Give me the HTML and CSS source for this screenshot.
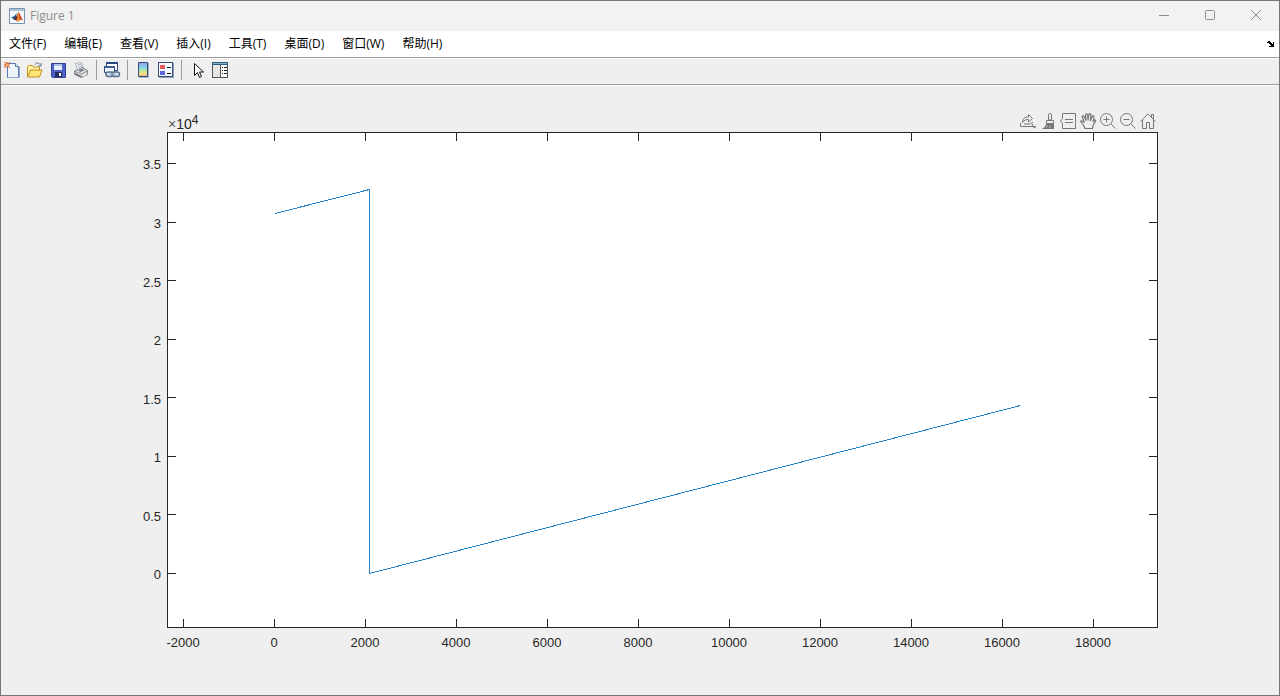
FILE: index.html
```html
<!DOCTYPE html>
<html lang="zh-CN">
<head>
<meta charset="utf-8">
<title>Figure 1</title>
<link rel="stylesheet" href="styles.css">
</head>
<body>
<div class="window">
  <header class="titlebar">
    <svg class="logo" width="16" height="16" viewBox="0 0 16 16" aria-hidden="true">
      <path d="M.5.5h15v15H.5z" fill="#f7fafc" stroke="#7894ac"/>
      <path d="M1 1h14v2H1z" fill="#a9c4da"/>
      <path d="M2 9.500l3-1.500 3-3-1.500 5.500-1.500 1z" fill="#2c6d9c"/>
      <path d="M4.500 11.500L7 9l2.500-5c.5 0 1 1 1.500 2.500l3 6-2.500-1-3 2.500-2-2.500z" fill="#cf4420"/>
      <path d="M9.500 4c-.8 3-1 5.500-1.500 10l2-1.800c0-3 0-6-.5-8.200z" fill="#f1a23a"/>
      <path d="M4.500 11.500L7 8l1.500 1-1.800 3.200z" fill="#4a2538"/>
    </svg>
    <h1 class="title">Figure 1</h1>
    <div class="window-controls">
      <button class="window-button" aria-label="最小化"><svg width="12" height="12" viewBox="0 0 12 12"><path d="M1 5.500h10"/></svg></button>
      <button class="window-button" aria-label="最大化"><svg width="12" height="12" viewBox="0 0 12 12"><rect x="1.500" y=".5" width="9" height="9" rx="1"/></svg></button>
      <button class="window-button" aria-label="关闭"><svg width="12" height="12" viewBox="0 0 12 12"><path d="M1 0l10 10M11 0L1 10"/></svg></button>
    </div>
  </header>

  <nav class="menubar">
    <button class="menu">文件(F)</button>
    <button class="menu">编辑(E)</button>
    <button class="menu">查看(V)</button>
    <button class="menu">插入(I)</button>
    <button class="menu">工具(T)</button>
    <button class="menu">桌面(D)</button>
    <button class="menu">窗口(W)</button>
    <button class="menu">帮助(H)</button>
    <button class="dock" aria-label="停靠图窗"><svg width="8" height="6" viewBox="0 0 8 6" shape-rendering="crispEdges"><path d="M1 0h2v1h1v1h1v1h1V1h1v5H2V5h2V4H3V3H2V2H1zM0 1h1v1H0z"/></svg></button>
  </nav>

  <div class="toolbar" role="toolbar">
    <button class="tool" aria-label="新建图窗"><svg width="16" height="16" viewBox="0 0 16 16">
      <path d="M3.500 1.500h8l3 3v11h-11z" fill="#edf4fc" stroke="#5678ad"/><path d="M11.500 1.500v3h3" fill="#fff" stroke="#5678ad"/><path d="M15.500 5v10.500H4" fill="none" stroke="#91aacb"/>
      <circle cx="3" cy="3" r="2" fill="#ffb27c" stroke="#df632e"/><path d="M3 0v1M0 3h1M5 1l1-1M5 5l1 1M0 6l1-1M0 0l1 1" stroke="#df632e"/></svg></button>
    <button class="tool" aria-label="打开文件"><svg width="16" height="16" viewBox="0 0 16 16">
      <path d="M.5 14.500V4.500l1-1h4l1 1.500h6v3" fill="#fff1a4" stroke="#c49318"/><path d="M.5 15L3.500 8h11.500l-2.500 7z" fill="#ffe477" stroke="#be8d18"/><path d="M8 2.500c1-2 4-2 5 0M14 1v3h-3" fill="none" stroke="#59718c"/></svg></button>
    <button class="tool" aria-label="保存图窗"><svg width="16" height="16" viewBox="0 0 16 16">
      <path d="M1.500 1.500h14v14h-13l-1-1z" fill="#4f60c6" stroke="#303e97"/><path d="M4 2h8v6H4z" fill="#e9eefb"/><path d="M4 2h8v2H4z" fill="#b1c2e8"/><path d="M5 10h7v5H5z" fill="#222d5e"/><path d="M9 11h2v3H9z" fill="#fff"/></svg></button>
    <button class="tool" aria-label="打印图窗"><svg width="16" height="16" viewBox="0 0 16 16">
      <path d="M4.500 8L2.500 1.500 8 .5l3 6.500" fill="#fff" stroke="#a4abb5"/><path d="M4.500 3l4-1M5 5l4-1" stroke="#9faec0"/><path d="M1.500 9l7.500-3.500 5.500 3v4l-6 3-7-3z" fill="#dcdee0" stroke="#858990"/><path d="M5 8.500l4-1.800 2.500 1.300-4 2z" fill="#777b82"/><path d="M2 9.500l6.500 2.500 6-3" fill="none" stroke="#8b8f95"/><path d="M2 11l6.500 3v1.500L2 12.500z" fill="#686d74"/><path d="M10 13l3-1.500V13l-3 1.500z" fill="#f7f7ef"/></svg></button>
    <span class="separator"></span>
    <button class="tool" aria-label="链接绘图"><svg width="16" height="16" viewBox="0 0 16 16">
      <path d="M2.500.5h11v8h-11z" fill="#fff" stroke="#29477e"/><path d="M2 0h12v2H2z" fill="#29477e"/><path d="M.5 4.500h10v6H.5z" fill="#eef4fb" stroke="#29477e"/><path d="M0 4h11v2H0z" fill="#3a5b94"/><rect x="2" y="10" width="7" height="4.500" rx="2.200" fill="#dce5ef" stroke="#536d8f" stroke-width="1.500"/><rect x="8" y="10" width="7.500" height="4.500" rx="2.200" fill="#dce5ef" stroke="#536d8f" stroke-width="1.500"/><path d="M5.500 12.300h6" stroke="#8ea7c5" stroke-width="1.500"/></svg></button>
    <span class="separator"></span>
    <button class="tool" aria-label="插入颜色栏"><svg width="16" height="16" viewBox="0 0 16 16">
      <defs><linearGradient id="bar" x2="0" y2="1"><stop stop-color="#9b99e8"/><stop offset=".35" stop-color="#83d6ed"/><stop offset=".65" stop-color="#cce78d"/><stop offset=".82" stop-color="#fadf81"/><stop offset="1" stop-color="#f39b91"/></linearGradient></defs>
      <path d="M3.500.5h9v14h-9z" fill="url(#bar)" stroke="#334c76"/><path d="M13.500 1v14.500H4" fill="none" stroke="#a7b3c5"/></svg></button>
    <button class="tool" aria-label="插入图例"><svg width="16" height="16" viewBox="0 0 16 16" shape-rendering="crispEdges">
      <path d="M.5.5h14v14H.5z" fill="#f6f9ff" stroke="#334c76"/><path d="M15.500 1v14.500H1" fill="none" stroke="#8d9fbd"/><path d="M2 3h5v4H2z" fill="#e35b5b"/><path d="M2 9h5v4H2z" fill="#6262df"/><path d="M9 5.500h4M9 11.500h4" stroke="#111"/></svg></button>
    <span class="separator"></span>
    <button class="tool" aria-label="编辑绘图"><svg width="16" height="16" viewBox="0 0 16 16">
      <path d="M5.500 1.500v12l3-3 2 5 2-1-2-4.500h4z" fill="#fff" stroke="#111"/></svg></button>
    <button class="tool" aria-label="打开属性检查器"><svg width="16" height="16" viewBox="0 0 16 16" shape-rendering="crispEdges">
      <path d="M.5.5h15v15H.5z" fill="#e5e5e3" stroke="#555"/><path d="M0 0h16v3H0z" fill="#315f82"/><path d="M1 1h14v1H1z" fill="#81aac5"/><path d="M8 3h7v12H8z" fill="#fff"/><path d="M8.500 3v12" stroke="#555"/><path d="M10 5.500h1M12 5.500h3M10 8.500h1M12 8.500h3M10 11.500h1M12 11.500h3" stroke="#222"/></svg></button>
  </div>

  <main class="figure">
    <div class="axes-header">
      <span class="exponent"><span class="times">×</span>10<sup>4</sup></span>
      <div class="axes-toolbar" role="toolbar">
        <button class="axes-tool" aria-label="导出"><svg width="16" height="16" viewBox="0 0 16 16"><path d="M2.500 9.500C2.500 5.500 5 4 8.500 4V1.500l4 4-4 3.500V6.500C6 6.500 4 7 2.500 9.500zM.5 10v3.500h12V11M4 11h6l3-2"/><path d="M12 13h4.500l-2.200 2.500z" class="solid"/></svg></button>
        <button class="axes-tool" aria-label="刷亮数据"><svg width="16" height="16" viewBox="0 0 16 16"><path d="M8.500 1.500c0-1.300 3-1.300 3 0V7h-3zM6.500 7.500h7v3h-7z"/><path d="M6 11h8v5H1.500c2.500-1 4-2.500 4.500-5z" class="solid"/><path d="M6 15l1.500-2.500M10 15v-2.500" class="light"/></svg></button>
        <button class="axes-tool" aria-label="数据提示"><svg width="16" height="16" viewBox="0 0 16 16"><path d="M2.500.5h13v15h-13v-5L.5 8l2-2.500zM5 6.500h8M5 9.500h8"/></svg></button>
        <button class="axes-tool" aria-label="平移"><svg width="16" height="16" viewBox="0 0 16 16"><path d="M5 15.500c-.8-3-3-5-4.500-7 1-1.200 2.300-.6 3.800 1.200L2.300 4c-.3-1.500 1.400-1.700 1.900-.4L6 7.500 5.500 2c0-1.600 2-1.600 2.200 0L8 7.500 8.700 1.700c.2-1.500 2.200-1.200 2.100.2L10.300 8l1.800-4.500c.6-1.300 2.200-.8 1.800.7L13 8.500l1-1.200c.9-1 2.100-.3 1.500.8L13 12.500l-.5 3z" stroke-width="1.200"/></svg></button>
        <button class="axes-tool" aria-label="放大"><svg width="16" height="16" viewBox="0 0 16 16"><circle cx="6.500" cy="6.500" r="6"/><path d="M11 11l4.500 4.500M3.500 6.500h6M6.500 3.500v6"/></svg></button>
        <button class="axes-tool" aria-label="缩小"><svg width="16" height="16" viewBox="0 0 16 16"><circle cx="6.500" cy="6.500" r="6"/><path d="M11 11l4.500 4.500M3.500 6.500h6"/></svg></button>
        <button class="axes-tool" aria-label="还原视图"><svg width="16" height="16" viewBox="0 0 16 16"><path d="M.5 8.500L8 .8l7.500 7.700M2.500 7v8.500h4v-6h3v6h4V7M11.500 4V1.500h2v5"/></svg></button>
      </div>
    </div>
    <svg class="plot" viewBox="1 132 1278 563" role="img" aria-label="折线图">
      <g class="axes">
        <rect x="167.500" y="132.500" width="990" height="495"/>
        <path d="M183.500 133v8M274.500 133v8M365.500 133v8M456.500 133v8M547.500 133v8M638.500 133v8M729.500 133v8M820.500 133v8M911.500 133v8M1002.500 133v8M1093.500 133v8"/>
        <path d="M183.500 627v-8M274.500 627v-8M365.500 627v-8M456.500 627v-8M547.500 627v-8M638.500 627v-8M729.500 627v-8M820.500 627v-8M911.500 627v-8M1002.500 627v-8M1093.500 627v-8"/>
        <path d="M168 163.500h8M168 222.500h8M168 280.500h8M168 339.500h8M168 397.500h8M168 456.500h8M168 514.500h8M168 573.500h8"/>
        <path d="M1157 163.500h-8M1157 222.500h-8M1157 280.500h-8M1157 339.500h-8M1157 397.500h-8M1157 456.500h-8M1157 514.500h-8M1157 573.500h-8"/>
      </g>
      <path class="series" d="M275 213.500L369.500 189.500V573.500L1020.500 405.500"/>
      <g class="y-labels">
        <text x="161" y="169">3.5</text><text x="161" y="228">3</text><text x="161" y="287">2.5</text><text x="161" y="345">2</text>
        <text x="161" y="404">1.5</text><text x="161" y="462">1</text><text x="161" y="521">0.5</text><text x="161" y="579">0</text>
      </g>
      <g class="x-labels">
        <text x="183" y="647">-2000</text><text x="274" y="647">0</text><text x="365" y="647">2000</text><text x="456" y="647">4000</text>
        <text x="547" y="647">6000</text><text x="638" y="647">8000</text><text x="729" y="647">10000</text><text x="820" y="647">12000</text>
        <text x="911" y="647">14000</text><text x="1002" y="647">16000</text><text x="1093" y="647">18000</text>
      </g>
    </svg>
  </main>
</div>
</body>
</html>
```

FILE: styles.css
```css
* { box-sizing: border-box; }
body { margin: 0; background: #efefef; }
button { display: flex; align-items: center; justify-content: center; margin: 0; padding: 0; border: 0; background: none; color: inherit; font: inherit; }
svg { display: block; flex: none; overflow: visible; }

.window { display: flex; flex-direction: column; min-height: 100vh; border: 1px solid #757575; background: #efefef; font: 12px/16px "Open Sans", "Noto Sans CJK SC", sans-serif; color: #000; }

.titlebar { display: flex; align-items: center; height: 30px; padding-left: 8px; background: #f2f2f2; }
.title { margin: 0 0 0 5px; font-size: 12px; font-weight: 400; color: #8c8c8c; }
.window-controls { display: flex; margin-left: auto; }
.window-button { width: 46px; height: 28px; }
.window-button svg { fill: none; stroke: #8c8c8c; }

.menubar { display: flex; align-items: center; gap: 18px; height: 27px; padding: 0 4px 0 8px; background: #fff; border-bottom: 1px solid #9b9b9b; }
.menu { white-space: nowrap; }
.dock { margin-left: auto; }

.toolbar { display: flex; align-items: center; gap: 7px; height: 28px; padding: 0 3px 4px; border-top: 1px solid #fff; border-bottom: 1px solid #fff; box-shadow: inset 0 -1px #9b9b9b; }
.tool { width: 16px; height: 16px; }
.separator { width: 1px; height: 20px; background: #9b9b9b; }

.figure { display: flex; flex: 1; flex-direction: column; }
.axes-header { display: flex; align-items: flex-end; justify-content: space-between; height: 46px; padding: 0 123px 1px 167px; }
.exponent { font: 14px/14px "Liberation Sans", Arial, sans-serif; color: #262626; }
.exponent sup { font-size: 12px; line-height: 0; vertical-align: 5px; }
.times { color: #555; }
.axes-toolbar { display: flex; gap: 4px; padding-bottom: 2px; }
.axes-tool { width: 16px; height: 16px; }
.axes-tool svg { fill: none; stroke: #777; }
.axes-tool .solid { fill: #777; stroke: none; }
.axes-tool .light { stroke: #bbb; }

.plot { width: 100%; font: 13px "Liberation Sans", Arial, sans-serif; }
.axes { fill: none; stroke: #262626; shape-rendering: crispEdges; }
.axes rect { fill: #fff; }
.series { fill: none; stroke: #2484c6; shape-rendering: crispEdges; }
.x-labels, .y-labels { fill: #262626; }
.x-labels { text-anchor: middle; }
.y-labels { text-anchor: end; }
```
